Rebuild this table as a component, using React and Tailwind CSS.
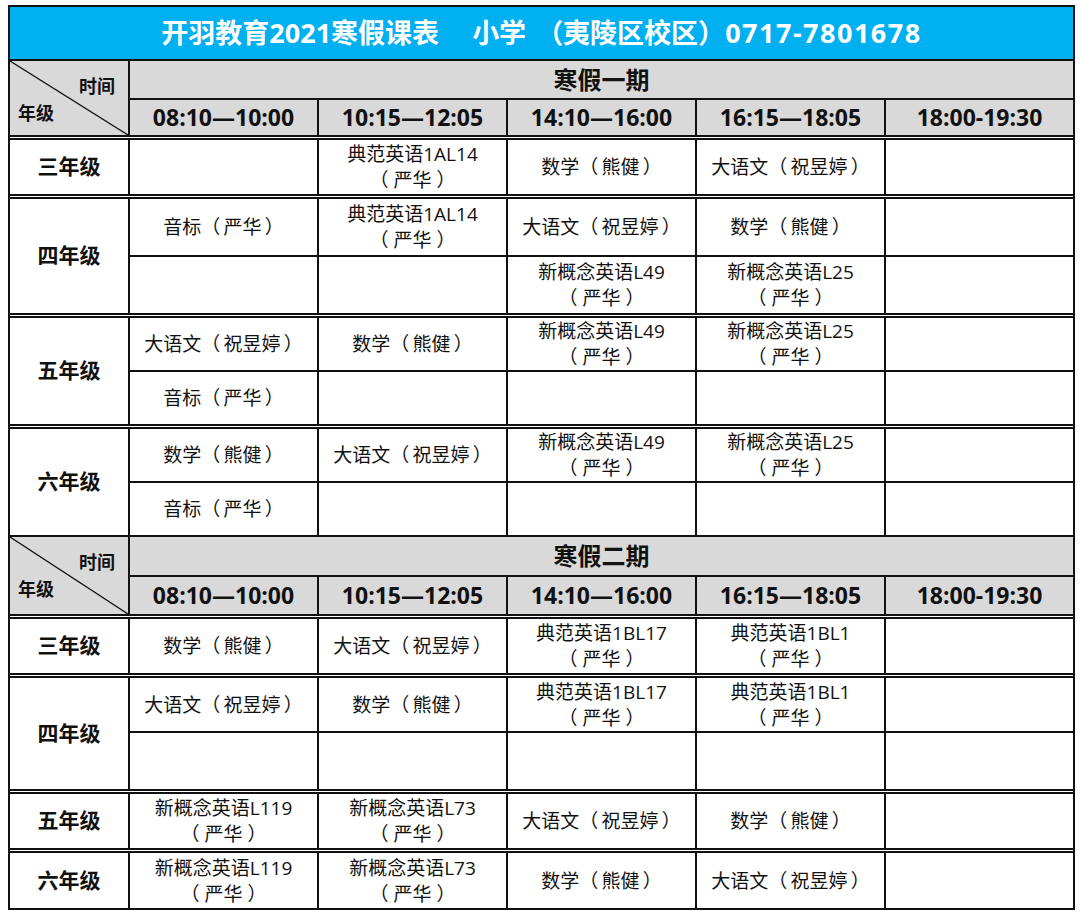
import React from "react";

const TIMES = ["08:10—10:00", "10:15—12:05", "14:10—16:00", "16:15—18:05", "18:00-19:30"];

// thin spaces inside the brackets so they sit like the reference font's
const YH = "（ 严华 ）";
const SX = "数学（\u2009熊健\u2009）";
const DYW = "大语文（\u2009祝昱婷\u2009）";
const YB = "音标（\u2009严华\u2009）";

// each group: grade label + rows of [height, cells]
const TERM_ONE = [
  { grade: "三年级", rows: [[54, ["", ["典范英语1AL14", YH], SX, DYW, ""]]] },
  {
    grade: "四年级",
    rows: [
      [56, [YB, ["典范英语1AL14", YH], DYW, SX, ""]],
      [56, ["", "", ["新概念英语L49", YH], ["新概念英语L25", YH], ""]],
    ],
  },
  {
    grade: "五年级",
    rows: [
      [52, [DYW, SX, ["新概念英语L49", YH], ["新概念英语L25", YH], ""]],
      [52, [YB, "", "", "", ""]],
    ],
  },
  {
    grade: "六年级",
    rows: [
      [52, [SX, DYW, ["新概念英语L49", YH], ["新概念英语L25", YH], ""]],
      [52, [YB, "", "", "", ""]],
    ],
  },
];

const TERM_TWO = [
  { grade: "三年级", rows: [[54, [SX, DYW, ["典范英语1BL17", YH], ["典范英语1BL1", YH], ""]]] },
  {
    grade: "四年级",
    rows: [
      [53, [DYW, SX, ["典范英语1BL17", YH], ["典范英语1BL1", YH], ""]],
      [56, ["", "", "", "", ""]],
    ],
  },
  { grade: "五年级", rows: [[54, [["新概念英语L119", YH], ["新概念英语L73", YH], DYW, SX, ""]]] },
  { grade: "六年级", rows: [[55, [["新概念英语L119", YH], ["新概念英语L73", YH], SX, DYW, ""]]] },
];

function Separator() {
  return <div className="col-span-6 h-px bg-white" />;
}

function Cell({ h, value }) {
  const lines = Array.isArray(value) ? value : value ? [value] : [];
  return (
    <div
      className="flex flex-col items-center justify-center whitespace-pre bg-white text-[19px] leading-[26px] text-[#111]"
      style={{ height: h }}
    >
      {lines.map((l, i) => (
        <span key={i}>{l}</span>
      ))}
    </div>
  );
}

function TermHeader({ title, h1, h2 }) {
  return (
    <>
      <div className="relative row-span-2 bg-[#d9d9d9]">
        <svg className="absolute inset-0 h-full w-full" viewBox="0 0 118 76" preserveAspectRatio="none">
          <line x1="0" y1="0" x2="118" y2="76" stroke="#111" strokeWidth="1.3" />
        </svg>
        <span className="absolute right-[13px] top-[16px] text-[18px] font-bold leading-none">时间</span>
        <span className="absolute left-[8px] top-[43px] text-[18px] font-bold leading-none">年级</span>
      </div>
      <div
        className="col-span-5 flex items-center justify-center bg-[#d9d9d9] text-[24px] font-bold"
        style={{ height: h1 }}
      >
        {title}
      </div>
      {TIMES.map((t) => (
        <div
          key={t}
          className="flex items-center justify-center bg-[#d9d9d9] text-[23px] font-bold"
          style={{ height: h2 }}
        >
          {t}
        </div>
      ))}
    </>
  );
}

function Term({ title, groups, h1, h2 }) {
  return (
    <>
      <TermHeader title={title} h1={h1} h2={h2} />
      {groups.map((g, gi) => (
        <React.Fragment key={g.grade}>
          <Separator />
          <div
            className={`flex items-center justify-center bg-white text-[21px] font-bold ${
              g.rows.length > 1 ? "row-span-2" : ""
            }`}
          >
            {g.grade}
          </div>
          {g.rows.map(([h, cells], ri) =>
            cells.map((c, ci) => <Cell key={`${gi}-${ri}-${ci}`} h={h} value={c} />)
          )}
        </React.Fragment>
      ))}
    </>
  );
}

export default function App() {
  return (
    <div className="min-h-[915px] bg-white pt-[5px] font-['Open_Sans','Noto_Sans_CJK_SC',sans-serif] text-[#111]">
      <div className="ml-2 w-[1067px] bg-[#111] p-[2px]">
        <div className="grid grid-cols-[118px_repeat(5,187px)] gap-[2px]">
          <div className="col-span-6 flex h-[52px] items-center justify-center bg-[#00b0f0] text-[27px] font-bold text-white">
            <span>开羽教育2021寒假课表</span>
            <span className="ml-[33px]">小学</span>
            <span className="ml-[10px]">（夷陵区校区）</span>
            <span className="tracking-[1.5px]">0717-7801678</span>
          </div>
          <Term title="寒假一期" groups={TERM_ONE} h1={37} h2={35} />
          <Term title="寒假二期" groups={TERM_TWO} h1={38} h2={37} />
        </div>
      </div>
    </div>
  );
}
